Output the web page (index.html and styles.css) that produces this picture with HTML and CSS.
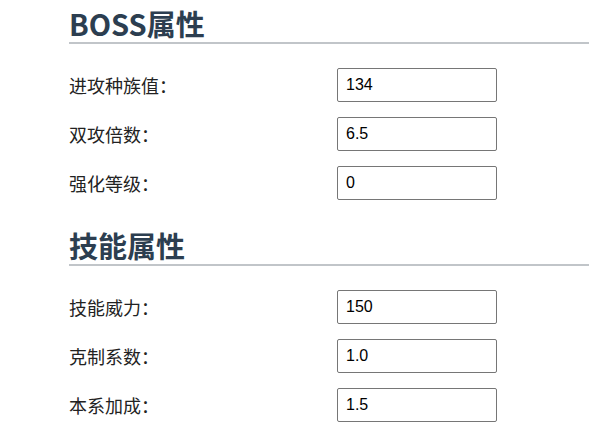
FILE: index.html
```html
<!doctype html>
<html lang="zh-CN">
<head>
    <meta charset="utf-8">
    <title>属性</title>
    <link rel="stylesheet" href="styles.css">
</head>
<body>
    <div class="page">
        <section class="group">
            <h2 class="group-title">BOSS属性</h2>
            <div class="fields">
                <label class="field-label" for="race">进攻种族值：</label>
                <input class="field-input" id="race" type="text" value="134">
                <label class="field-label" for="double">双攻倍数：</label>
                <input class="field-input" id="double" type="text" value="6.5">
                <label class="field-label" for="level">强化等级：</label>
                <input class="field-input" id="level" type="text" value="0">
            </div>
        </section>

        <section class="group">
            <h2 class="group-title">技能属性</h2>
            <div class="fields">
                <label class="field-label" for="power">技能威力：</label>
                <input class="field-input" id="power" type="text" value="150">
                <label class="field-label" for="counter">克制系数：</label>
                <input class="field-input" id="counter" type="text" value="1.0">
                <label class="field-label" for="stab">本系加成：</label>
                <input class="field-input" id="stab" type="text" value="1.5">
            </div>
        </section>
    </div>
</body>
</html>
```
FILE: styles.css
```css
body {
    margin: 0;
    background: #fff;
    font-family: "Noto Sans CJK SC", "Noto Sans", sans-serif;
    color: #222;
}

.page {
    padding: 4px 0 0 69px;
}

.group {
    margin-bottom: 26px;
}

.group-title {
    margin: 0;
    font-size: 29px;
    line-height: 38px;
    font-weight: 700;
    color: #2c3e50;
    border-bottom: 2px solid #c1c5c9;
}

.fields {
    display: grid;
    grid-template-columns: 268px 160px;
    row-gap: 15px;
    align-items: center;
    padding-top: 24px;
}

.field-label {
    font-size: 18px;
    line-height: 24px;
}

.field-input {
    box-sizing: border-box;
    width: 160px;
    height: 34px;
    margin: 0;
    padding: 0 8px;
    border: 1px solid #767676;
    border-radius: 2px;
    font-family: "Liberation Sans", Arial, sans-serif;
    font-size: 16px;
    color: #000;
}
```
